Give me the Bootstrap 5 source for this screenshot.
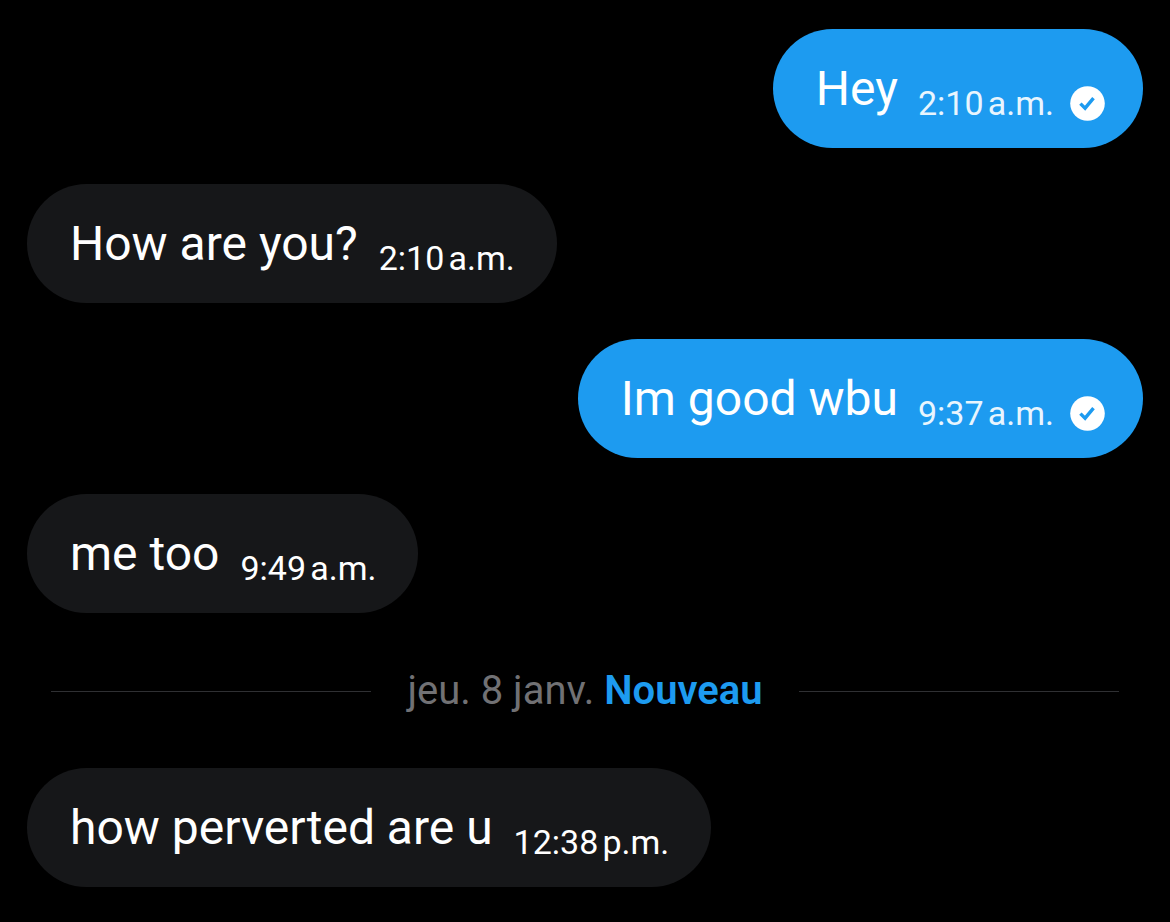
<!DOCTYPE html>
<html lang="fr">
<head>
<meta charset="utf-8">
<meta name="viewport" content="width=device-width, initial-scale=1">
<title>Messages</title>
<link href="https://cdn.jsdelivr.net/npm/bootstrap@5.3.0/dist/css/bootstrap.min.css" rel="stylesheet">
<style>
body { background: #000; color: #fff; font-family: Roboto, "Noto Sans", sans-serif; }
.thread { gap: 36px; padding: 29px 27px 36px; }
.bubble { padding: 30px 42px 25px 43px; border-radius: 60px; background: #161719; gap: 21px; }
.bubble.sent { background: #1d9bf0; padding-right: 38px; gap: 20px; }
.message { font-size: 48px; line-height: 60px; margin-bottom: 4px; }
.stamp { font-size: 34px; line-height: 40px; white-space: nowrap; }
.sent .stamp { color: #e8f5fe; }
.status { gap: 16px; }
.tick { width: 35px; height: 35px; flex: none; }
.divider { gap: 36px; padding: 18px 24px 17px; font-size: 40px; line-height: 48px; color: #717174; }
.rule { height: 1px; background: #2f3033; }
.fresh { color: #1d9bf0; font-weight: 600; }
</style>
</head>
<body>
<main class="thread d-flex flex-column">
  <div class="bubble sent d-flex align-items-end align-self-end">
    <span class="message">Hey</span>
    <span class="status d-flex align-items-center">
      <time class="stamp">2:10&#8239;a.m.</time>
      <svg class="tick" viewBox="0 0 35 35" role="img" aria-label="Lu"><circle cx="17.5" cy="17.5" r="17.3" fill="#fff"/><path d="M10.4 17.6l4.7 4.6 8.4-10" fill="none" stroke="#1d9bf0" stroke-width="3.4"/></svg>
    </span>
  </div>
  <div class="bubble d-flex align-items-end align-self-start">
    <span class="message">How are you?</span>
    <time class="stamp">2:10&#8239;a.m.</time>
  </div>
  <div class="bubble sent d-flex align-items-end align-self-end">
    <span class="message">Im good wbu</span>
    <span class="status d-flex align-items-center">
      <time class="stamp">9:37&#8239;a.m.</time>
      <svg class="tick" viewBox="0 0 35 35" role="img" aria-label="Lu"><circle cx="17.5" cy="17.5" r="17.3" fill="#fff"/><path d="M10.4 17.6l4.7 4.6 8.4-10" fill="none" stroke="#1d9bf0" stroke-width="3.4"/></svg>
    </span>
  </div>
  <div class="bubble d-flex align-items-end align-self-start">
    <span class="message">me too</span>
    <time class="stamp">9:49&#8239;a.m.</time>
  </div>
  <div class="divider d-flex align-items-center">
    <span class="rule flex-fill"></span>
    <span class="text-nowrap">jeu. 8 janv. <span class="fresh">Nouveau</span></span>
    <span class="rule flex-fill"></span>
  </div>
  <div class="bubble d-flex align-items-end align-self-start">
    <span class="message">how perverted are u</span>
    <time class="stamp">12:38&#8239;p.m.</time>
  </div>
</main>
<script src="https://cdn.jsdelivr.net/npm/bootstrap@5.3.0/dist/js/bootstrap.bundle.min.js"></script>
</body>
</html>
